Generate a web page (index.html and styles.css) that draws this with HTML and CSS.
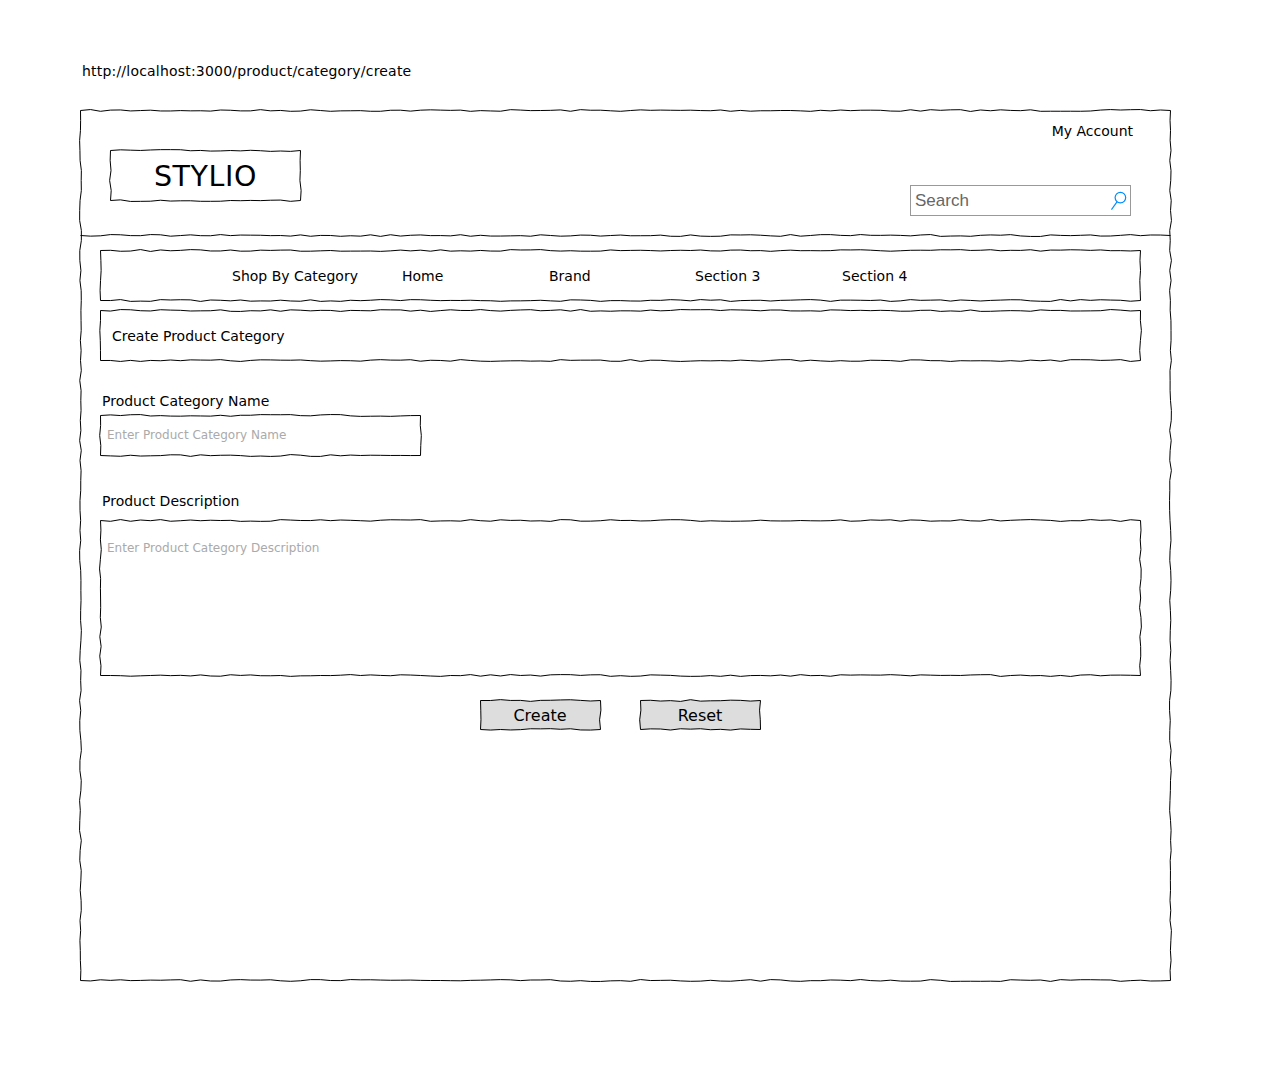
FILE: index.html
```html
<!DOCTYPE html>
<html lang="en">
<head>
<meta charset="utf-8">
<title>Create Product Category</title>
<link rel="stylesheet" href="styles.css">
</head>
<body>
<p class="url">http://localhost:3000/product/category/create</p>
<div class="window sketch">
  <header class="header sketch-bottom">
    <div class="logo sketch">STYLIO</div>
    <div class="tools">
      <a class="account">My Account</a>
      <div class="search">
        <span>Search</span>
        <svg class="search-icon" width="16" height="20" viewBox="0 0 16 20"><circle cx="9.4" cy="6.6" r="5.3"/><path d="M6 10.8L.4 18.6"/></svg>
      </div>
    </div>
  </header>
  <main class="content">
    <nav class="nav sketch">
      <a>Shop By Category</a>
      <a>Home</a>
      <a>Brand</a>
      <a>Section 3</a>
      <a>Section 4</a>
    </nav>
    <h1 class="title sketch">Create Product Category</h1>
    <div class="label name-label">Product Category Name</div>
    <div class="field name-field sketch">Enter Product Category Name</div>
    <div class="label description-label">Product Description</div>
    <div class="field description-field sketch">Enter Product Category Description</div>
    <div class="actions">
      <button class="button sketch"><span>Create</span></button>
      <button class="button sketch"><span>Reset</span></button>
    </div>
  </main>
</div>
<script src="sketch.js"></script>
</body>
</html>
```
FILE: styles.css
```css
* { box-sizing: border-box; }
body {
  min-height: 1071px;
  margin: 0;
  padding: 60px 0 0 80px;
  background: #fff;
  color: #000;
  font: 14px/20px Verdana, "DejaVu Sans", sans-serif;
}
.url { margin: 0 0 30px; padding: 1px 0 0 2px; height: 20px; letter-spacing: 0.2px; }
.sketch, .sketch-bottom { position: relative; }
.outline {
  position: absolute;
  left: 0;
  top: 0;
  overflow: visible;
  fill: none;
  stroke: #000;
  stroke-width: 1;
  pointer-events: none;
}
.window { width: 1090px; height: 870px; }
.header {
  display: flex;
  justify-content: space-between;
  height: 125px;
  padding: 11px 40px 0 30px;
}
.logo {
  display: flex;
  align-items: center;
  justify-content: center;
  width: 190px;
  height: 50px;
  margin-top: 29px;
  padding: 3px 0 0 1px;
  font-size: 28.5px;
  letter-spacing: 0.6px;
}
.tools { display: flex; flex-direction: column; align-items: flex-end; }
.account { margin-right: -3px; }
.search {
  display: flex;
  align-items: center;
  justify-content: space-between;
  width: 221px;
  height: 31px;
  margin: 44px -1px 0 0;
  padding: 0 3px 0 4px;
  border: 1px solid #999;
  color: #666;
  font: 17px/29px "Liberation Sans", Arial, sans-serif;
}
.search-icon { fill: none; stroke: #008cff; stroke-width: 1.2; }
.content { padding: 15px 30px 0 20px; }
.nav {
  display: grid;
  grid-template-columns: 170px 147px 146px 147px auto;
  align-items: center;
  height: 50px;
  padding: 2px 0 0 132px;
}
.title {
  display: flex;
  align-items: center;
  height: 50px;
  margin: 10px 0 0;
  padding: 2px 0 0 12px;
  font-size: 14px;
  font-weight: normal;
}
.label { padding-left: 2px; }
.name-label { margin: 31px 0 4px; }
.description-label { margin: 36px 0 9px; }
.field { padding-left: 7px; color: #aaa; font-size: 12px; }
.name-field { width: 320px; height: 40px; padding-top: 10px; }
.description-field { height: 155px; padding-top: 18px; }
.actions { display: flex; justify-content: center; gap: 40px; margin-top: 25px; }
.button {
  width: 120px;
  height: 29px;
  padding: 2px 0 0;
  border: 0;
  background: none;
  color: #000;
  font: 16px/27px Verdana, "DejaVu Sans", sans-serif;
}
.button span { position: relative; }
.button .outline { fill: #ddd; }
```
FILE: sketch.js
```js
// Hand-drawn outlines: each edge is split into 10px steps with a small seeded wobble.
let seed = 7;
function random() {
  seed = (seed * 16807) % 2147483647;
  return seed / 2147483647;
}
function edge(x1, y1, x2, y2) {
  const length = Math.hypot(x2 - x1, y2 - y1);
  const steps = Math.max(1, Math.round(length / 10));
  const nx = -(y2 - y1) / length, ny = (x2 - x1) / length;
  let d = '';
  for (let i = 1; i <= steps; i++) {
    const t = i / steps;
    const w = i === steps ? 0 : (random() - 0.5) * 1.9;
    d += `L${(x1 + (x2 - x1) * t + nx * w).toFixed(2)} ${(y1 + (y2 - y1) * t + ny * w).toFixed(2)}`;
  }
  return d;
}
function outline(host, d) {
  const svg = document.createElementNS('http://www.w3.org/2000/svg', 'svg');
  const path = document.createElementNS('http://www.w3.org/2000/svg', 'path');
  svg.setAttribute('class', 'outline');
  svg.setAttribute('width', host.offsetWidth);
  svg.setAttribute('height', host.offsetHeight);
  path.setAttribute('d', d);
  svg.append(path);
  host.prepend(svg);
}
document.querySelectorAll('.sketch').forEach(host => {
  const r = host.offsetWidth + 0.5, b = host.offsetHeight + 0.5;
  outline(host, 'M.5 .5' + edge(0.5, 0.5, r, 0.5) + edge(r, 0.5, r, b) + edge(r, b, 0.5, b) + edge(0.5, b, 0.5, 0.5) + 'Z');
});
document.querySelectorAll('.sketch-bottom').forEach(host => {
  const r = host.offsetWidth + 0.5, b = host.offsetHeight + 0.5;
  outline(host, `M.5 ${b}` + edge(0.5, b, r, b));
});
```
